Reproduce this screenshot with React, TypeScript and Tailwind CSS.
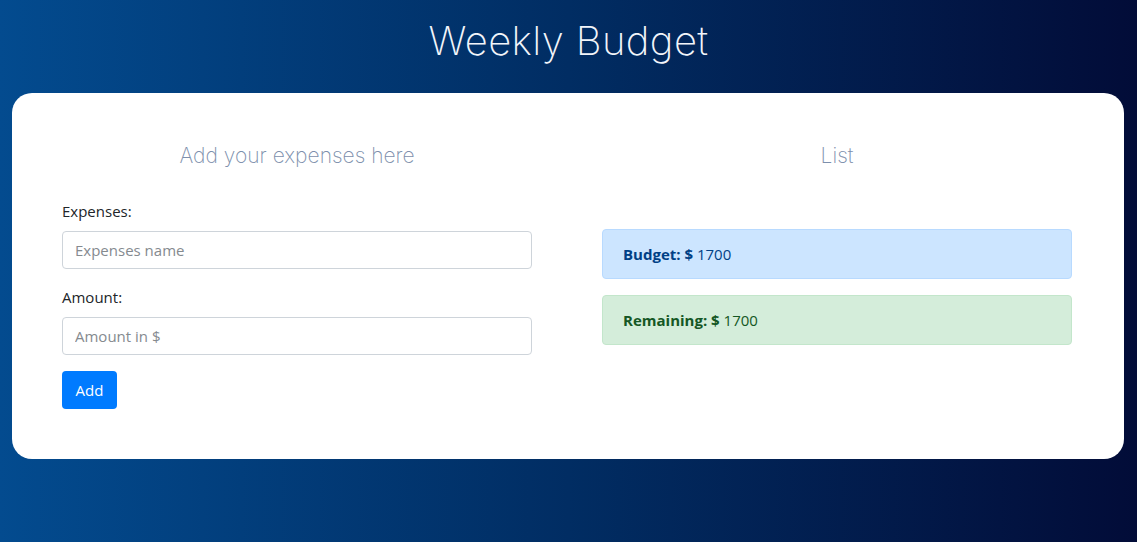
import { useState } from 'react';

const BODY_FONT = "font-['Segoe_UI','Open_Sans','Noto_Sans',sans-serif]";

export default function App() {
  const [name, setName] = useState('');
  const [amount, setAmount] = useState('');
  const budget = 1700;
  const remaining = 1700;

  return (
    <div className={`min-h-[542px] w-full bg-gradient-to-r from-[#034b8f] via-[#012d63] to-[#020c38] ${BODY_FONT}`}>
      <h1 className="pt-[12px] pb-[24px] text-center text-[40px] leading-[57px] font-extralight tracking-[0.01em] text-[#f2f5fa] font-['Inter',sans-serif]">
        Weekly Budget
      </h1>

      <div className="ml-3 mr-[13px] rounded-[20px] bg-white px-[50px] pt-[44px] pb-[50px]">
        <div className="grid grid-cols-[470px_470px] gap-[70px]">
          <div>
            <h2 className="mb-[24px] text-center text-[21px] leading-[38px] font-extralight text-[#7d8fac] font-['Inter',sans-serif]">
              Add your expenses here
            </h2>
            <form onSubmit={e => e.preventDefault()}>
              <label className="mb-2 block text-[15px] leading-6 text-[#212529]">Expenses:</label>
              <input
                type="text"
                value={name}
                onChange={e => setName(e.target.value)}
                placeholder="Expenses name"
                className="mb-4 block h-[38px] w-full rounded border border-[#ced4da] px-3 text-[15px] text-[#495057] placeholder:text-[#858a8f] outline-none"
              />
              <label className="mb-2 block text-[15px] leading-6 text-[#212529]">Amount:</label>
              <input
                type="text"
                value={amount}
                onChange={e => setAmount(e.target.value)}
                placeholder="Amount in $"
                className="mb-4 block h-[38px] w-full rounded border border-[#ced4da] px-3 text-[15px] text-[#495057] placeholder:text-[#858a8f] outline-none"
              />
              <button type="submit" className="h-[38px] w-[55px] rounded bg-[#007bff] text-[15px] text-white">
                Add
              </button>
            </form>
          </div>

          <div>
            <h2 className="mb-[54px] text-center text-[21px] leading-[38px] font-extralight text-[#7d8fac] font-['Inter',sans-serif]">
              List
            </h2>
            <div className="mb-4 flex h-[50px] items-center rounded border border-[#b8daff] bg-[#cce5ff] px-5 text-[15px] text-[#004085]">
              <span className="font-bold">Budget: $</span>&nbsp;{budget}
            </div>
            <div className="flex h-[50px] items-center rounded border border-[#c3e6cb] bg-[#d4edda] px-5 text-[15px] text-[#155724]">
              <span className="font-bold">Remaining: $</span>&nbsp;{remaining}
            </div>
          </div>
        </div>
      </div>
    </div>
  );
}
